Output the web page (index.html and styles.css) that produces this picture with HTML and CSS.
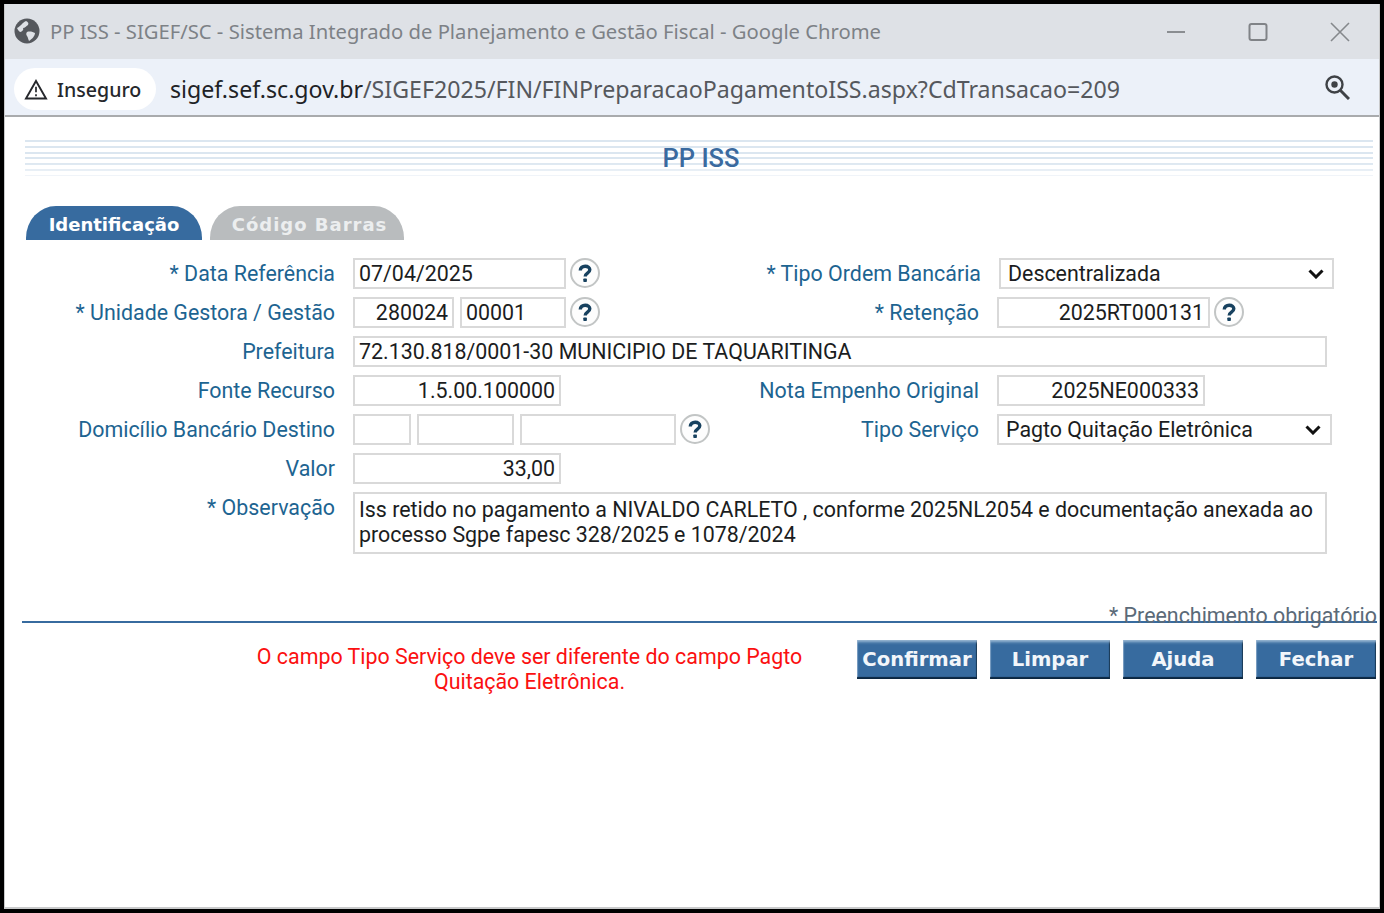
FILE: index.html
```html
<!DOCTYPE html>
<html lang="pt-BR">
<head>
<meta charset="utf-8">
<title>PP ISS</title>
<link rel="stylesheet" href="styles.css">
</head>
<body>
<div class="window">
  <header class="titlebar">
    <svg class="globe" viewBox="0 0 26 26" width="26" height="26"><circle cx="13" cy="13" r="12.5" fill="#55585d"/><path d="M3 10c3-1 5-5 9-7 2 1 3 2 2 4-2 1-3 3-5 3 1 2-1 3-2 4-2 0-3-2-4-4zM13 14c3-1 6 0 8 1 0 3-3 6-6 8-1-2-1-4-2-5-1-1-1-3 0-4z" fill="#dee1e6"/></svg>
    <span class="title-text">PP ISS - SIGEF/SC - Sistema Integrado de Planejamento e Gestão Fiscal - Google Chrome</span>
    <div class="win-controls">
      <svg viewBox="0 0 20 20" width="20" height="20"><path d="M1 10h18" stroke="#8a8d91" stroke-width="2"/></svg>
      <svg viewBox="0 0 20 20" width="20" height="20"><rect x="1.500" y="2" width="17" height="16" rx="2" fill="none" stroke="#808387" stroke-width="2"/></svg>
      <svg viewBox="0 0 20 20" width="20" height="20"><path d="M1 1l18 18M19 1L1 19" stroke="#85888c" stroke-width="1.600"/></svg>
    </div>
  </header>
  <div class="toolbar">
    <div class="security">
      <svg viewBox="0 0 24 22" width="24" height="21"><path d="M12 2L22.500 20.500H1.500Z" fill="none" stroke="#26282c" stroke-width="2"/><path d="M12 8v6M12 16v2" stroke="#26282c" stroke-width="1.800"/></svg>
      <span>Inseguro</span>
    </div>
    <span class="url"><span class="host">sigef.sef.sc.gov.br</span>/SIGEF2025/FIN/FINPreparacaoPagamentoISS.aspx?CdTransacao=209</span>
    <svg class="zoom-icon" viewBox="0 0 26 26" width="26" height="26"><circle cx="10.500" cy="10.500" r="8" fill="none" stroke="#3f4246" stroke-width="2.400"/><circle cx="10.500" cy="10.500" r="3.200" fill="#3f4246"/><path d="M16.500 16.500L25 25" stroke="#3f4246" stroke-width="3"/></svg>
  </div>
  <main class="page">
    <div class="heading"><h1>PP ISS</h1></div>
    <nav class="tabs">
      <div class="tab tab-active">Identificação</div>
      <div class="tab tab-off">Código Barras</div>
    </nav>
    <form class="form">
      <label class="lbl"><i>* </i>Data Referência</label>
      <div class="cell">
        <div class="fld w213">07/04/2025</div>
        <svg class="help"><use href="#help"/></svg>
      </div>
      <label class="lbl lbl-shift"><i>* </i>Tipo Ordem Bancária</label>
      <div class="fld sel sel-a">Descentralizada<svg class="chev" viewBox="0 0 16 10" width="16" height="10"><path d="M1.500 1.500L8 8l6.500-6.500" fill="none" stroke="#111" stroke-width="3"/></svg></div>

      <label class="lbl"><i>* </i>Unidade Gestora / Gestão</label>
      <div class="cell">
        <div class="fld w101 right">280024</div>
        <div class="fld w106">00001</div>
        <svg class="help"><use href="#help"/></svg>
      </div>
      <label class="lbl"><i>* </i>Retenção</label>
      <div class="cell">
        <div class="fld w213 right">2025RT000131</div>
        <svg class="help"><use href="#help"/></svg>
      </div>

      <label class="lbl">Prefeitura</label>
      <div class="fld wide">72.130.818/0001-30 MUNICIPIO DE TAQUARITINGA</div>

      <label class="lbl">Fonte Recurso</label>
      <div class="fld w208 right">1.5.00.100000</div>
      <label class="lbl">Nota Empenho Original</label>
      <div class="fld w208 right">2025NE000333</div>

      <label class="lbl">Domicílio Bancário Destino</label>
      <div class="cell">
        <div class="fld w58"></div>
        <div class="fld w97"></div>
        <div class="fld w156"></div>
        <svg class="help help-near"><use href="#help"/></svg>
      </div>
      <label class="lbl">Tipo Serviço</label>
      <div class="fld sel sel-b">Pagto Quitação Eletrônica<svg class="chev" viewBox="0 0 16 10" width="16" height="10"><path d="M1.500 1.500L8 8l6.500-6.500" fill="none" stroke="#111" stroke-width="3"/></svg></div>

      <label class="lbl">Valor</label>
      <div class="fld w208 right">33,00</div>
      <span class="spacer"></span>

      <label class="lbl"><i>* </i>Observação</label>
      <div class="fld wide area">Iss retido no pagamento a NIVALDO CARLETO , conforme 2025NL2054 e documentação anexada ao processo Sgpe fapesc 328/2025 e 1078/2024</div>
    </form>
    <div class="required"><span>* Preenchimento obrigatório</span></div>
    <div class="actions">
      <p class="error">O campo Tipo Serviço deve ser diferente do campo Pagto Quitação Eletrônica.</p>
      <div class="buttons">
        <button type="button" class="btn">Confirmar</button>
        <button type="button" class="btn">Limpar</button>
        <button type="button" class="btn">Ajuda</button>
        <button type="button" class="btn">Fechar</button>
      </div>
    </div>
  </main>
</div>
<svg class="defs" width="0" height="0">
  <symbol id="help" viewBox="0 0 30 30">
    <circle cx="15" cy="15" r="14" fill="#fdfdfd" stroke="#c2c5c5" stroke-width="2"/>
    <path d="M10.300 12.500c0-2.700 2.100-4.300 4.900-4.300 2.800 0 4.600 1.500 4.600 3.600 0 3.400-4.600 3.300-4.600 6.700" fill="none" stroke="#17415f" stroke-width="3.400"/>
    <rect x="13.300" y="20.400" width="3.600" height="3.600" rx=".8" fill="#17415f"/>
  </symbol>
</svg>
</body>
</html>
```
FILE: styles.css
```css
* { box-sizing: border-box; }
html, body { margin: 0; height: 100%; }
body { background: #000; overflow: hidden; }
.defs { position: absolute; }
.window {
  margin: 4px 4px 0 4px;
  height: 905px;
  background: #fff;
  border: solid #c9cacb;
  border-width: 0 1px 2px 1px;
  display: flex;
  flex-direction: column;
  font-family: Roboto, "Liberation Sans", sans-serif;
}
.titlebar {
  height: 55px;
  flex: none;
  background: #dee1e6;
  display: flex;
  align-items: center;
  padding-left: 9px;
  color: #7d8186;
}
.globe { flex: none; margin-top: -1px; }
.title-text { margin: -1px 0 0 10px; white-space: nowrap; font: 20.230px "Noto Sans", sans-serif; }
.win-controls { margin-left: auto; display: flex; gap: 62px; padding-right: 29px; align-items: center; }
.toolbar {
  height: 58px;
  flex: none;
  background: #ecf1f9;
  border-bottom: 2px solid #a9abad;
  display: flex;
  align-items: center;
  padding-left: 9px;
}
.security {
  width: 142px;
  height: 42px;
  border-radius: 21px;
  background: #fff;
  display: flex;
  align-items: center;
  gap: 9px;
  padding-left: 10px;
  font: 500 19.600px "Noto Sans", sans-serif;
  color: #26282c;
  margin-top: 4px;
}
.url { margin: 3px 0 0 14px; font: 23.170px "Noto Sans", sans-serif; color: #55585d; white-space: nowrap; }
.host { color: #202226; }
.zoom-icon { margin-left: auto; margin-right: 29px; }
.page { flex: 1; padding: 23px 2px 0 20px; }
.heading {
  margin-right: 4px;
  height: 36px;
  background:
    linear-gradient(to bottom, rgba(255,255,255,0) 60%, rgba(255,255,255,.6) 100%),
    repeating-linear-gradient(to bottom, #dbe6f0 0, #dbe6f0 2px, #fff 2px, #fff 5.800px);
  display: flex;
  justify-content: center;
}
.heading h1 {
  margin: 0;
  font: 500 25.500px/36px Roboto, sans-serif;
  color: #3a6a9f;
  transform: translateX(2px);
}
.tabs { display: flex; gap: 8px; margin: 30px 0 0 1px; }
.tab {
  height: 34px;
  border-radius: 30px 30px 0 0 / 32px 32px 0 0;
  color: #fff;
  font: bold 18px/37px "DejaVu Sans", sans-serif;
  text-align: center;
}
.tab-active { width: 176px; background: #376b9f; }
.tab-off { width: 194px; padding-left: 5px; background: #b9bcbe; color: #eceeef; letter-spacing: 1px; }
.form {
  display: grid;
  grid-template-columns: 311px 382px 226px 343px;
  column-gap: 18px;
  row-gap: 8px;
  grid-auto-rows: 31px;
  margin: 18px 0 0 -1px;
  font-size: 21.400px;
  color: #1b1d21;
}
.lbl { text-align: right; line-height: 31px; color: #1d6491; white-space: nowrap; }
.lbl i { font-style: normal; }
.lbl-shift { position: relative; left: 2px; }
.cell { display: flex; gap: 6px; align-items: flex-start; }
.fld {
  height: 31px;
  border: 2px solid #d9d9d9;
  background: #fff;
  padding: 0 4px;
  line-height: 27px;
  white-space: nowrap;
}
.right { text-align: right; }
.w213 { width: 213px; flex: none; }
.w208 { width: 208px; }
.w101 { width: 101px; }
.w106 { width: 106px; }
.w58 { width: 58px; }
.w97 { width: 97px; }
.w156 { width: 156px; }
.help { width: 30px; height: 30px; flex: none; margin-left: -2px; }
.help-near { margin-left: -2px; }
.wide { grid-column: 2 / 5; width: 974px; }
.area { height: 62px; white-space: normal; line-height: 25px; grid-row: span 2; padding-top: 3px; }
.sel { display: flex; align-items: center; justify-content: space-between; padding: 0 8px 0 7px; }
.sel-a { width: 335px; margin-left: 2px; }
.sel-b { width: 335px; padding-right: 9px; }
.spacer { grid-column: 3 / 5; }
.required {
  height: 44px;
  margin: 17px 0 0 -3px;
  border-bottom: 2px solid #376b9f;
  display: flex;
  justify-content: flex-end;
  align-items: flex-end;
  font-size: 21.400px;
  color: #5b6a78;
}
.required span { line-height: 25px; margin-bottom: -7px; }
.actions { display: flex; margin-top: 17px; align-items: flex-start; }
.error {
  width: 551px;
  margin: 4px 0 0 229px;
  text-align: center;
  font-size: 21.400px;
  line-height: 25px;
  color: #fb1010;
  flex: none;
}
.buttons { display: flex; gap: 13px; margin-left: 52px; }
.btn {
  width: 120px;
  height: 39px;
  border: 0;
  padding: 0;
  background: #376b9f;
  box-shadow: inset 0 4px 3px -2px #9dbad5, inset 0 -3px 1px -1px #0b2640, inset 2px 0 1px -1px #7ea0c2, inset -2px 0 1px -1px #15334f;
  color: #f2f6fa;
  font: bold 19.600px "DejaVu Sans", sans-serif;
}
```
